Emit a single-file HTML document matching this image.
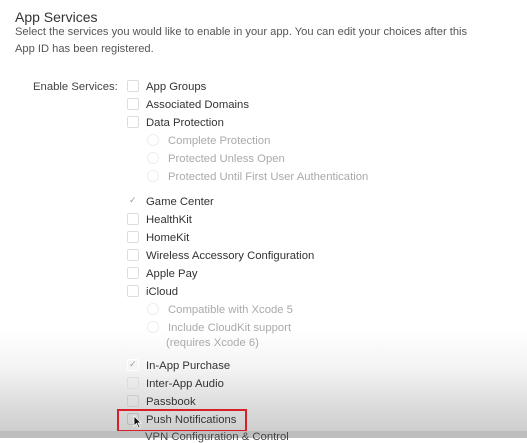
<!DOCTYPE html>
<html><head><style>
body{margin:0;width:527px;height:438px;overflow:hidden;font-family:"Liberation Sans",sans-serif;color:#333;position:relative;background:#fff}
.bg{position:absolute;left:0;top:0;width:527px;height:438px;background:linear-gradient(#fff 0,#fff 330px,#f3f3f3 370px,#dcdcdc 405px,#cfcfcf 430px)}
.t{position:absolute;white-space:nowrap}
.h{left:15px;top:9px;font-size:14px;color:#333}
.p{left:15px;font-size:11.15px;color:#555}
.lab{left:33px;top:81px;font-size:11.3px;color:#444}
.it{position:absolute;left:127px;font-size:11.3px;color:#333;white-space:nowrap;height:14px;line-height:14px}
.cb{display:inline-block;width:10px;height:10px;border:1px solid #ddd;border-radius:2px;vertical-align:-2px;margin-right:7px;background:#fff;position:relative}
.ck::after{content:"✓";position:absolute;left:1px;top:-3px;font-size:9px;color:#999}
.sub{position:absolute;left:147px;font-size:11.3px;color:#aaa;white-space:nowrap;line-height:14px}
.rd{display:inline-block;width:10px;height:10px;border:1px solid #eee;border-radius:50%;vertical-align:-2px;margin-right:9px}
.red{position:absolute;left:117px;top:409px;width:126px;height:19px;border:2px solid #d6202a}
.bar{position:absolute;left:0;top:431px;width:527px;height:7px;background:#bdbdbd}
</style></head><body>
<div class="bg"></div>
<div class="t h">App Services</div>
<div class="t p" style="top:26px">Select the services you would like to enable in your app. You can edit your choices after this</div>
<div class="t p" style="top:43px">App ID has been registered.</div>
<div class="t lab">Enable Services:</div>
<div class="it" style="top:80px"><span class="cb"></span>App Groups</div>
<div class="it" style="top:98px"><span class="cb"></span>Associated Domains</div>
<div class="it" style="top:116px"><span class="cb"></span>Data Protection</div>
<div class="sub" style="top:134px"><span class="rd"></span>Complete Protection</div>
<div class="sub" style="top:152px"><span class="rd"></span>Protected Unless Open</div>
<div class="sub" style="top:170px"><span class="rd"></span>Protected Until First User Authentication</div>
<div class="it" style="top:195px"><span class="cb ck" style="border-color:#fff"></span>Game Center</div>
<div class="it" style="top:213px"><span class="cb"></span>HealthKit</div>
<div class="it" style="top:231px"><span class="cb"></span>HomeKit</div>
<div class="it" style="top:249px"><span class="cb"></span>Wireless Accessory Configuration</div>
<div class="it" style="top:267px"><span class="cb"></span>Apple Pay</div>
<div class="it" style="top:285px"><span class="cb"></span>iCloud</div>
<div class="sub" style="top:303px"><span class="rd"></span>Compatible with Xcode 5</div>
<div class="sub" style="top:321px"><span class="rd"></span>Include CloudKit support</div>
<div class="sub" style="top:336px;left:166px">(requires Xcode 6)</div>
<div class="it" style="top:359px"><span class="cb ck" style="border-color:#fff;background:transparent"></span>In-App Purchase</div>
<div class="it" style="top:377px"><span class="cb" style="background:transparent"></span>Inter-App Audio</div>
<div class="it" style="top:395px"><span class="cb" style="background:transparent;border-color:#ccc"></span>Passbook</div>
<div class="it" style="top:413px"><span class="cb" style="background:transparent;border-color:#bbb"></span>Push Notifications</div>
<div class="red"></div>
<div class="bar"></div>
<div class="t" style="left:145px;top:431px;font-size:11.3px;color:#444">VPN Configuration &amp; Control</div>
<svg style="position:absolute;left:133px;top:415px" width="9" height="14"><path d="M1 1 L1 11 L3.5 8.5 L5.5 13 L7 12.3 L5 8 L8 8 Z" fill="#111" stroke="#fff" stroke-width="0.8"/></svg>
</body></html>
